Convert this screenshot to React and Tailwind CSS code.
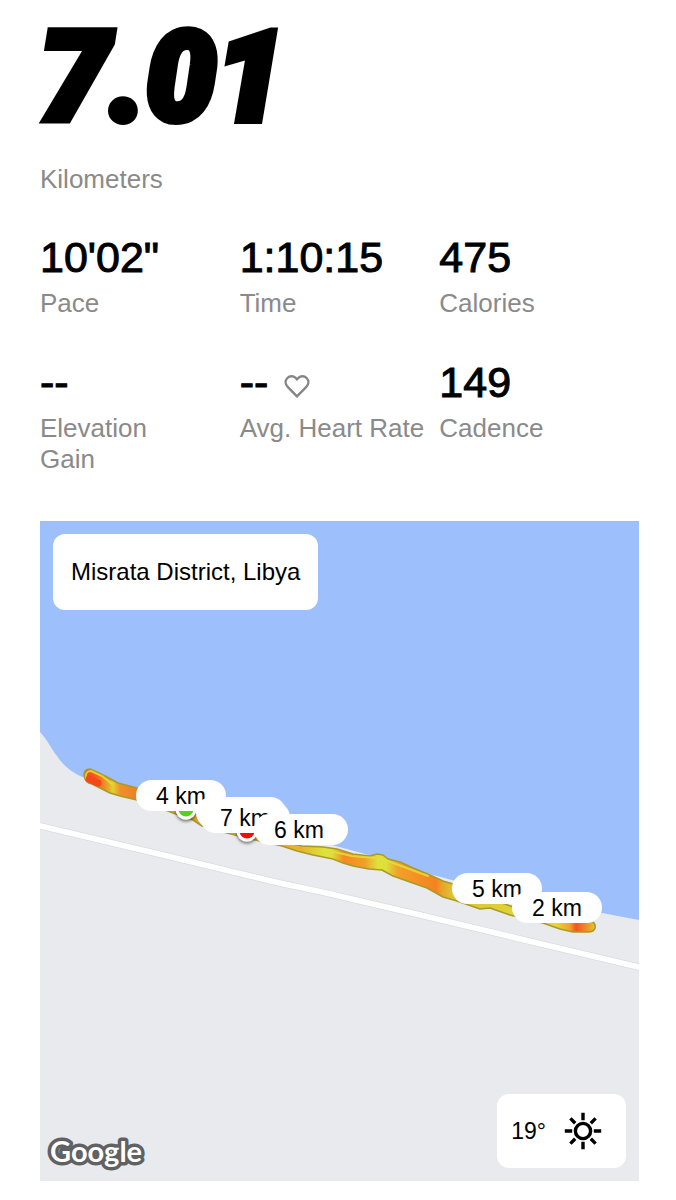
import React from 'react'

const stats = [
  { value: `10'02"`, label: 'Pace' },
  { value: '1:10:15', label: 'Time' },
  { value: '475', label: 'Calories' },
  { value: '--', label: 'Elevation\nGain' },
  { value: '--', label: 'Avg. Heart Rate', heart: true },
  { value: '149', label: 'Cadence' },
]

// drawn in order, later markers cover earlier ones
const markers = [
  { x: 96, y: 259, text: '4 km' },
  { x: 156, y: 276, text: '' },
  { x: 160, y: 281, text: '7 km' },
  { x: 218, y: 293, text: '' },
  { x: 214, y: 293, text: '6 km' },
  { x: 412, y: 352, text: '5 km' },
  { x: 472, y: 371, text: '2 km' },
]

const heat = [
  [45, '#f04a1c'],
  [58, '#f4641f'],
  [68, '#e8a52a'],
  [73, '#e3d034'],
  [80, '#f0912a'],
  [96, '#ee8028'],
  [130, '#dba02f'],
  [165, '#d9a032'],
  [210, '#e8a02b'],
  [262, '#e6b52c'],
  [284, '#dde23a'],
  [292, '#dde03a'],
  [304, '#f58a22'],
  [325, '#f0a028'],
  [338, '#dfe23a'],
  [346, '#dde03a'],
  [358, '#f2a028'],
  [396, '#f5821f'],
  [402, '#e8a42a'],
  [412, '#dcc434'],
  [470, '#ddd236'],
  [516, '#ead82f'],
  [530, '#f0a22a'],
  [536, '#f2561f'],
  [541, '#f0702a'],
  [549, '#e8a02b'],
  [555, '#e2c530'],
]

const road = 'M-4 304L123 334L223 358C250 365 275 369 303 376L393 397L493 421L603 447'

const HeartIcon = () => (
  <svg width="26" height="26" viewBox="0 0 26 26" fill="none" stroke="#858585" strokeWidth="2.4">
    <path d="M13 23.3 3.9 14.2C1 11.2 1 7.4 3.4 5c2.3-2.3 6-2.3 8.2-.1L13 6.3l1.4-1.4c2.2-2.2 5.9-2.2 8.2.1 2.4 2.4 2.4 6.2-.5 9.2z" />
  </svg>
)

const SunIcon = () => (
  <svg width="38" height="38" viewBox="0 0 38 38" fill="none" stroke="#000" strokeWidth="3.4">
    <circle cx="19" cy="19" r="7.6" />
    <path d="M19 .8v7.4M19 29.8v7.4M.8 19h7.4M29.8 19h7.4M6.4 6.4l4.8 4.8M26.8 26.8l4.8 4.8M6.4 31.6l4.8-4.8M26.8 11.2l4.8-4.8" />
  </svg>
)

const Stat = ({ value, label, heart }) => (
  <div>
    <dd className="flex items-center h-12 text-[43px] leading-12 [-webkit-text-stroke:1px_black]">
      {value}
      {heart && <span className="ml-4 mt-2"><HeartIcon /></span>}
    </dd>
    <dt className="mt-[7px] text-[26px] leading-[31px] text-[#8a8a8a] whitespace-pre">{label}</dt>
  </div>
)

const RouteMap = () => (
  <svg viewBox="0 0 599 660" className="block w-full" role="img" aria-label="Route map">
    <defs>
      <linearGradient id="heat" gradientUnits="userSpaceOnUse" x1="0" y1="0" x2="599" y2="0">
        {heat.map(([x, color]) => <stop key={x} offset={x / 599} stopColor={color} />)}
      </linearGradient>
      <filter id="shadow" x="-50%" y="-50%" width="200%" height="200%">
        <feDropShadow dx="0" dy="2" stdDeviation="1.5" floodOpacity="0.5" />
      </filter>
    </defs>
    <rect width="599" height="660" fill="#9dbffb" />
    <path fill="#e8eaed" d="M0 211C6 217 11 227 17 235C22 243 30 250 40 255L50 259L97 275L240 310L340 337L385 352L397 355L412 359L500 384L562 392L599 399V660H0Z" />
    <path fill="none" stroke="#d9dbde" strokeWidth="7" d={road} />
    <path fill="none" stroke="#fff" strokeWidth="5.6" d={road} />
    <path
      fill="url(#heat)"
      stroke="#a99b27"
      strokeWidth="1.6"
      strokeLinejoin="round"
      d="M44 254Q44 248 50 248L59 252L67 256L78 262L97 267L130 281L160 294L200 310L240 320L262 325L283 326L297 328L313 333L330 335L337 333L343 334L348 338L360 341L373 347L390 354L403 360L413 363L440 374L490 392L520 400L551 400Q556 402 555 407Q554 411 548 411L533 411L520 408L503 402L490 399L470 394L450 387L440 388L417 380L403 376L387 367L370 361L353 355L342 349L329 348L313 345L303 342L293 338L273 334L257 330L242 325L207 317L187 312L162 305L153 299L133 292L123 288L97 279L80 275L70 272L52 263Q45 262 44 254Z"
    />
    <path fill="none" stroke="#e5dd3c" strokeWidth="2" strokeLinecap="round" opacity=".85" d="M46 257Q45 250 51 250L62 255L72 263M290 330L312 335L335 337M345 339L372 349L388 355" />
    <path fill="none" stroke="#f2491c" strokeWidth="7" strokeLinecap="round" d="M49 258L58 262" />
    <g filter="url(#shadow)">
      <circle cx="146" cy="288" r="10.5" fill="#fff" />
      <circle cx="207" cy="310" r="10.5" fill="#fff" />
    </g>
    <circle cx="146" cy="288" r="7.5" fill="#56d11f" />
    <circle cx="207" cy="310" r="7.5" fill="#f20d0d" />
    {markers.map((m) => (
      <g key={m.x}>
        <rect x={m.x} y={m.y} width="90" height="31" rx="15.5" fill="#fff" />
        {m.text && <text x={m.x + 20} y={m.y + 24} fontSize="23">{m.text}</text>}
      </g>
    ))}
    <text
      x="10"
      y="641"
      fontSize="29"
      fill="#fff"
      stroke="#5f6163"
      strokeWidth="7"
      strokeLinejoin="round"
      paintOrder="stroke"
      className="font-[Lato,sans-serif] font-bold"
    >
      Google
    </text>
  </svg>
)

export default function App() {
  return (
    <main className="min-h-screen bg-white pl-10 pr-[37px] pb-5 font-['Liberation_Sans',Arial,sans-serif] text-black">
      <h1>
        <span className="block pt-3 text-[124px] leading-[132px] font-black italic font-[Roboto,sans-serif] [-webkit-text-stroke:8px_black]">7.01</span>
        <span className="block mt-5 text-[26px] leading-[31px] font-normal text-[#8a8a8a]">Kilometers</span>
      </h1>

      <dl className="mt-[38px] grid grid-cols-3 gap-y-[39px]">
        {stats.map((s) => <Stat key={s.label} {...s} />)}
      </dl>

      <section className="relative mt-[46px]">
        <RouteMap />
        <div className="absolute top-[13px] left-[13px] rounded-xl bg-white px-[18px] py-[22px] text-2xl">
          Misrata District, Libya
        </div>
        <div className="absolute bottom-[13px] right-[13px] flex items-center gap-[18px] rounded-xl bg-white pl-[14px] pr-6 h-[74px] text-[23px]">
          19°
          <SunIcon />
        </div>
      </section>
    </main>
  )
}
